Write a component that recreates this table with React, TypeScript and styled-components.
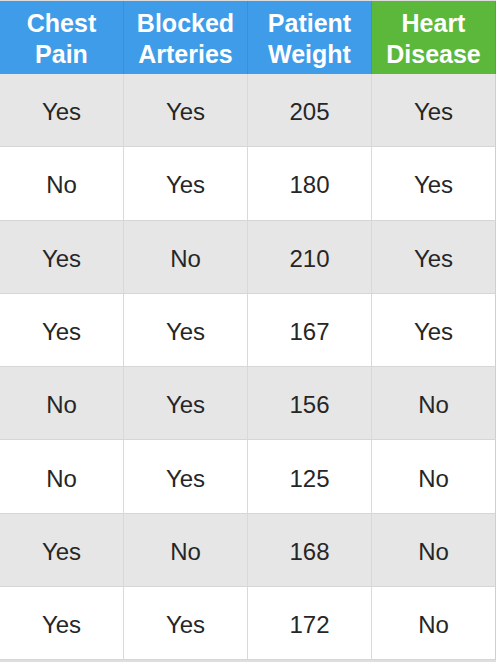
import React from 'react';
import styled, { createGlobalStyle } from 'styled-components';

const GlobalStyle = createGlobalStyle`
    html, body {
        margin: 0;
        padding: 0;
        background: #ffffff;
    }
    body {
        font-family: "Liberation Sans", Arial, sans-serif;
    }
`;

const Table = styled.div`
    width: 496px;
    display: grid;
    grid-template-columns: repeat(4, 1fr);
    border-top: 1px solid #dcdcdc;
    border-bottom: 2px solid #dedede;
    box-sizing: border-box;
`;

const HeadCell = styled.div<{ $accent?: boolean }>`
    height: 73px;
    display: flex;
    align-items: center;
    justify-content: center;
    text-align: center;
    background: ${p => (p.$accent ? '#5cb83b' : '#3f9ce9')};
    border-right: 1px solid ${p => (p.$accent ? '#52a834' : '#3a8fd6')};
    color: #ffffff;
    font-weight: bold;
    font-size: 25px;
    line-height: 31px;
    padding-top: 3px;
    box-sizing: border-box;
    &:last-child {
        border-right: 1px solid #c9c9c9;
    }
`;

const Cell = styled.div<{ $shaded: boolean; $last?: boolean }>`
    height: 73.3px;
    display: flex;
    align-items: center;
    justify-content: center;
    padding-top: 4px;
    background: ${p => (p.$shaded ? '#e6e6e6' : '#ffffff')};
    border-bottom: 1px solid #d6d6d6;
    border-right: 1px solid ${p => (p.$last ? '#cfcfcf' : '#d9d9d9')};
    color: #262626;
    font-size: 24px;
    box-sizing: border-box;
`;

const headers = [
    { label: ['Chest', 'Pain'] },
    { label: ['Blocked', 'Arteries'] },
    { label: ['Patient', 'Weight'] },
    { label: ['Heart', 'Disease'], accent: true },
];

const rows = [
    ['Yes', 'Yes', '205', 'Yes'],
    ['No', 'Yes', '180', 'Yes'],
    ['Yes', 'No', '210', 'Yes'],
    ['Yes', 'Yes', '167', 'Yes'],
    ['No', 'Yes', '156', 'No'],
    ['No', 'Yes', '125', 'No'],
    ['Yes', 'No', '168', 'No'],
    ['Yes', 'Yes', '172', 'No'],
];

const App = () => {
    return (
        <>
            <GlobalStyle />
            <Table>
                {headers.map(h => (
                    <HeadCell key={h.label.join(' ')} $accent={h.accent}>
                        {h.label[0]}<br />{h.label[1]}
                    </HeadCell>
                ))}
                {rows.map((row, i) =>
                    row.map((value, j) => (
                        <Cell key={`${i}-${j}`} $shaded={i % 2 === 0} $last={j === 3}>
                            {value}
                        </Cell>
                    ))
                )}
            </Table>
        </>
    );
};

export default App;
